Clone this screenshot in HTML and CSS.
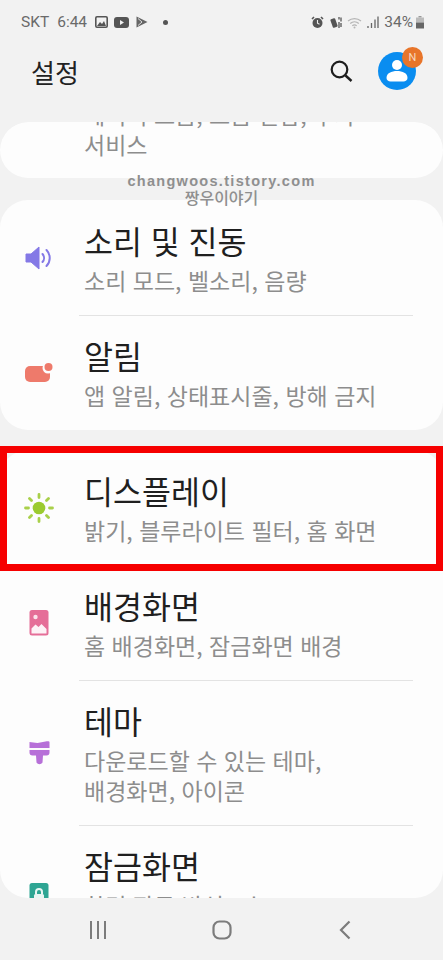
FILE: index.html
```html
<!DOCTYPE html>
<html lang="ko">
<head>
    <meta charset="UTF-8">
    <meta name="viewport" content="width=device-width, initial-scale=1.0">
    <title>설정</title>
    <link rel="stylesheet" href="styles.css">
</head>
<body>
    <div class="phone">
        <div class="status-bar">
            <div class="status-left">
                <span class="carrier">SKT</span>
                <span class="clock">6:44</span>
                <svg class="st-gallery" width="13" height="12" viewBox="0 0 13 12"><rect x="0.8" y="0.8" width="11.4" height="10.4" rx="1.2" fill="none" stroke="#555" stroke-width="1.6"/><path d="M2 10l3-4 2 2 2-3 2 5z" fill="#555"/></svg>
                <svg class="st-video" width="15" height="11" viewBox="0 0 15 11"><rect width="15" height="11" rx="3" fill="#555"/><path d="M6 3l4 2.5L6 8z" fill="#f2f2f2"/></svg>
                <svg class="st-play" width="12" height="12" viewBox="0 0 12 12"><path d="M0.5 0.5L11.5 6 0.5 11.5z" fill="#666"/><path d="M2 2.5L6 6 2 9.5" fill="none" stroke="#ddd" stroke-width="1"/></svg>
                <span class="st-dot"></span>
            </div>
            <div class="status-right">
                <svg width="13" height="13" viewBox="0 0 13 13"><circle cx="6.5" cy="7" r="5" fill="#555"/><path d="M1 3l2-2M12 3l-2-2" stroke="#555" stroke-width="1.6"/><path d="M6.5 4v3.2l2 1" fill="none" stroke="#eee" stroke-width="1.1"/></svg>
                <svg class="st-mute" width="13" height="13" viewBox="0 0 13 13"><rect x="2.5" y="2.5" width="5" height="9" rx="1" fill="#555" transform="rotate(-20 5 7)"/><path d="M10 1v2.500M12 1.500v4M10 6v6M12 7v4" stroke="#555" stroke-width="1.300"/></svg>
                <svg class="st-wifi" width="16" height="13" viewBox="0 0 16 13"><path d="M1 5a10 10 0 0 1 13 0M3.200 7.500a6.500 6.500 0 0 1 8.600 0M5.300 9.800a3.400 3.400 0 0 1 4.400 0" fill="none" stroke="#b5b5b5" stroke-width="1.200"/><circle cx="7.500" cy="11.500" r="1" fill="#b5b5b5"/></svg>
                <svg class="st-signal" width="12" height="12" viewBox="0 0 12 12"><path d="M1 12V10M4.500 12V7M8 12V3.500M11 12V0.500" stroke="#666" stroke-width="1.300"/></svg>
                <span class="battery-text">34%</span>
                <svg class="st-battery" width="8" height="13" viewBox="0 0 8 13"><rect x="2.500" y="0" width="3" height="1.500" fill="#999"/><rect x="0" y="1.500" width="8" height="5" fill="#bbb"/><rect x="0" y="6.500" width="8" height="6" fill="#666"/></svg>
            </div>
        </div>

        <div class="top-bar">
            <h1>설정</h1>
            <div class="top-actions">
                <svg width="24" height="24" viewBox="0 0 24 24"><circle cx="10.500" cy="10.500" r="7.800" fill="none" stroke="#1d1d1d" stroke-width="2.200"/><path d="M16.500 16.500l6 5.500" stroke="#1d1d1d" stroke-width="2.400"/></svg>
                <div class="avatar">
                    <svg width="38" height="38" viewBox="0 0 38 38"><circle cx="19" cy="19" r="19" fill="#0a8df0"/><circle cx="19" cy="13" r="5" fill="#fff"/><path d="M8.500 26c0-5 5-7 10.500-7s10.500 2 10.500 7c0 2-2 3.500-4 3.500h-13c-2 0-4-1.500-4-3.500z" fill="#fff"/></svg>
                    <span class="badge">N</span>
                </div>
            </div>
        </div>

        <div class="scroll-area">
            <div class="card card-cut">
                <div class="row">
                    <div class="row-text">
                        <div class="row-sub">데이터 요금, 요금 결합, 부가<br>서비스</div>
                    </div>
                </div>
            </div>

            <div class="card">
                <div class="row">
                    <div class="row-icon">
                        <svg width="28" height="24" viewBox="0 0 28 24"><path d="M1 8h5l8-7v22l-8-7H1z" fill="#8479e6" stroke="#8479e6" stroke-linejoin="round"/><path d="M17.500 8a6 6 0 0 1 0 8M21.500 4a11.500 11.500 0 0 1 0 16" fill="none" stroke="#8479e6" stroke-width="2" stroke-linecap="round"/></svg>
                    </div>
                    <div class="row-text">
                        <div class="row-title">소리 및 진동</div>
                        <div class="row-sub">소리 모드, 벨소리, 음량</div>
                    </div>
                </div>
                <div class="row">
                    <div class="row-icon">
                        <svg width="28" height="19" viewBox="0 0 28 19"><rect x="0" y="3" width="25" height="16" rx="5" fill="#ee7a6b"/><circle cx="23" cy="5" r="5.500" fill="#fdfdfd"/><circle cx="23.500" cy="4" r="4" fill="#ee7a6b"/></svg>
                    </div>
                    <div class="row-text">
                        <div class="row-title">알림</div>
                        <div class="row-sub">앱 알림, 상태표시줄, 방해 금지</div>
                    </div>
                </div>
            </div>

            <div class="card">
                <div class="row">
                    <div class="row-icon">
                        <svg width="30" height="30" viewBox="0 0 30 30"><circle cx="15" cy="15" r="6.300" fill="#9bcb2f"/><path d="M15 1.500v3M15 25.500v3M1.500 15h3M25.500 15h3M5.500 5.500l2 2M22.500 22.500l2 2M24.500 5.500l-2 2M7.500 22.500l-2 2" stroke="#a9d04a" stroke-width="2.800" stroke-linecap="round"/></svg>
                    </div>
                    <div class="row-text">
                        <div class="row-title">디스플레이</div>
                        <div class="row-sub">밝기, 블루라이트 필터, 홈 화면</div>
                    </div>
                </div>
                <div class="row">
                    <div class="row-icon">
                        <svg width="20" height="26" viewBox="0 0 20 26"><rect width="19" height="25.500" x="0.500" rx="2.500" fill="#e56e98"/><circle cx="6.500" cy="7" r="2.200" fill="#fbe3ec"/><path d="M2.500 23.500v-5l4-4 3 2.500 3-3 5 5v4.500z" fill="#fdf2f6"/></svg>
                    </div>
                    <div class="row-text">
                        <div class="row-title">배경화면</div>
                        <div class="row-sub">홈 배경화면, 잠금화면 배경</div>
                    </div>
                </div>
                <div class="row">
                    <div class="row-icon">
                        <svg width="21" height="26" viewBox="0 0 21 26"><path d="M0.500 2l8 1 8-1.500c2-.5 4-.5 4 .5v6H0.500z" fill="#b770d8"/><path d="M0.500 10h20v2.500a3 3 0 0 1-3 3h-3.500l-.5 7a3.500 3.500 0 0 1-6 0l-.5-7H3.500a3 3 0 0 1-3-3z" fill="#b770d8"/></svg>
                    </div>
                    <div class="row-text">
                        <div class="row-title">테마</div>
                        <div class="row-sub">다운로드할 수 있는 테마,<br>배경화면, 아이콘</div>
                    </div>
                </div>
                <div class="row">
                    <div class="row-icon row-icon-up">
                        <svg width="20" height="26" viewBox="0 0 20 26"><rect width="19" height="25.500" x="0.500" rx="2.500" fill="#2ea593"/><path d="M7 11V9a3 3 0 0 1 6 0v2" fill="none" stroke="#e8f6f3" stroke-width="2"/><rect x="5" y="11" width="10" height="9" rx="1.500" fill="#e8f6f3"/></svg>
                    </div>
                    <div class="row-text">
                        <div class="row-title">잠금화면</div>
                        <div class="row-sub">화면 잠금 방식, Always On<br>Display, 시계 스타일</div>
                    </div>
                </div>
            </div>
        </div>

        <div class="nav-bar">
            <svg width="20" height="20" viewBox="0 0 20 20"><path d="M3 1v18M10 1v18M17 1v18" stroke="#7c7c7c" stroke-width="2"/></svg>
            <svg width="20" height="20" viewBox="0 0 20 20"><rect x="1.500" y="1.500" width="17" height="17" rx="6" fill="none" stroke="#7c7c7c" stroke-width="2.200"/></svg>
            <svg width="20" height="20" viewBox="0 0 20 20"><path d="M14.500 1.500L6 10l8.500 8.500" fill="none" stroke="#7c7c7c" stroke-width="2.200"/></svg>
        </div>

        <!-- 워터마크, 빨간 표시 -->
        <div class="watermark">
            <div class="wm-url">changwoos.tistory.com</div>
            <div class="wm-name">짱우이야기</div>
        </div>
        <div class="highlight"></div>
    </div>
</body>
</html>
```

FILE: styles.css
```css
body {
    margin: 0;
    background-color: #f2f2f2;
    font-family: "Roboto", "Noto Sans CJK KR", sans-serif;
}
.phone {
    position: relative;
    width: 443px;
    height: 960px;
    overflow: hidden;
    background-color: #f2f2f2;
}
.status-bar {
    display: flex;
    justify-content: space-between;
    align-items: center;
    height: 44px;
    padding: 0 19px 0 21px;
    color: #6a6a6a;
    font-size: 15.5px;
}
.status-left, .status-right {
    display: flex;
    align-items: center;
}
.clock {
    margin-left: 8px;
}
.st-gallery {
    margin-left: 8px;
}
.st-video {
    margin-left: 6px;
}
.st-play {
    margin-left: 7px;
}
.st-dot {
    width: 5px;
    height: 5px;
    margin-left: 15px;
    border-radius: 50%;
    background: #555;
}
.st-mute {
    margin-left: 5px;
}
.st-wifi {
    margin-left: 5px;
}
.st-signal {
    margin-left: 4px;
}
.battery-text {
    margin-left: 5px;
}
.st-battery {
    margin-left: 3px;
}
.top-bar {
    display: flex;
    justify-content: space-between;
    align-items: center;
    height: 78px;
    padding: 0 27px 0 31px;
    box-sizing: border-box;
}
.top-bar h1 {
    margin: 0;
    color: #222;
    font-size: 26px;
    font-weight: 400;
    font-family: "Noto Sans CJK KR", sans-serif;
    position: relative;
    top: -12px;
}
.top-actions {
    display: flex;
    align-items: center;
    gap: 25px;
    position: relative;
    top: -12px;
}
.avatar {
    position: relative;
    width: 38px;
    height: 38px;
}
.avatar svg {
    display: block;
}
.badge {
    position: absolute;
    top: -5px;
    right: -7px;
    width: 21px;
    height: 21px;
    border-radius: 50%;
    background: #e8752a;
    color: #f7d9c0;
    font-size: 11px;
    line-height: 21px;
    text-align: center;
}
.scroll-area {
    height: 776px;
    overflow: hidden;
    border-radius: 28px;
}
.card {
    margin-bottom: 20px;
    background: #fdfdfd;
    border-radius: 28px;
}
.card-cut {
    height: 56px;
    margin-bottom: 22px;
    overflow: hidden;
}
.card-cut .row {
    margin-top: -28px;
    padding: 0 0 19px;
}
.row {
    display: flex;
    align-items: center;
    position: relative;
    padding: 20px 0;
}
.row + .row::before {
    content: "";
    position: absolute;
    top: 0;
    left: 79px;
    right: 30px;
    height: 1px;
    background: #e3e3e3;
}
.row-icon {
    display: flex;
    justify-content: center;
    align-items: center;
    width: 30px;
    margin-left: 24px;
}
.row-icon-up {
    margin-top: -4px;
}
.card-cut .row-text {
    margin-left: 84px;
}
.row-text {
    margin-left: 30px;
    font-family: "Noto Sans CJK KR", sans-serif;
}
.row-title {
    color: #1f1f1f;
    font-size: 31.5px;
    line-height: 40px;
}
.row-sub {
    margin-top: 5px;
    color: #8d8d8d;
    font-size: 23px;
    line-height: 30px;
}
.nav-bar {
    display: flex;
    justify-content: space-between;
    align-items: center;
    height: 62px;
    padding: 2px 88px 0;
    box-sizing: border-box;
}
.watermark {
    position: absolute;
    top: 172px;
    left: 0;
    width: 443px;
    color: #8f8f8f;
    text-align: center;
    font-weight: 700;
}
.wm-url {
    font-size: 14.5px;
    line-height: 18px;
    letter-spacing: 1.3px;
    font-family: "Liberation Sans", sans-serif;
}
.wm-name {
    font-size: 16px;
    line-height: 14px;
    font-family: "Noto Sans CJK KR", sans-serif;
    font-weight: 500;
}
.highlight {
    position: absolute;
    top: 446px;
    left: 0;
    width: 443px;
    height: 125px;
    box-sizing: border-box;
    border: 7px solid #f60000;
}
```
